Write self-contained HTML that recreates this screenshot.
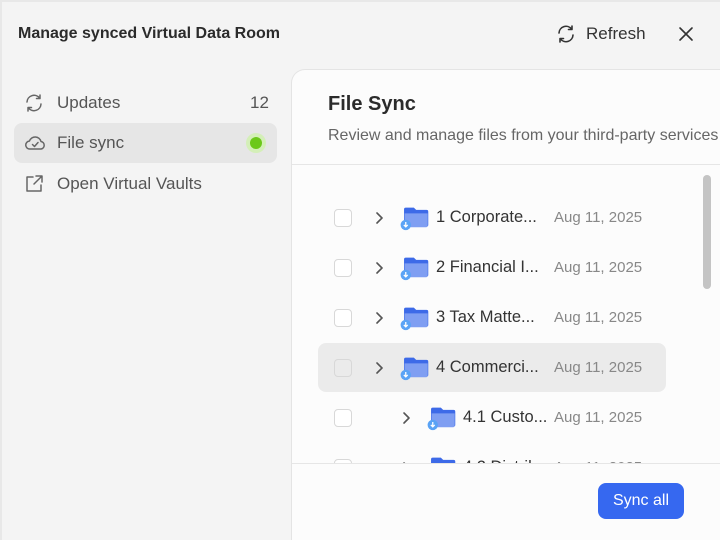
<!DOCTYPE html>
<html><head><style>
*{margin:0;padding:0;box-sizing:border-box}
html,body{width:720px;height:540px;overflow:hidden}
body{background:#f4f4f4;font-family:"Liberation Sans",sans-serif;position:relative;color:#333}
.frame{position:absolute;left:0;top:0;width:720px;height:540px;border:2px solid #e8e8e8;border-right:none;border-bottom:none}
.title{position:absolute;left:18px;top:25px;font-size:16px;font-weight:bold;color:#2b2b2b}
.refresh{position:absolute;left:556px;top:24px;font-size:17px;color:#333;display:flex;align-items:center;gap:10px}
.close{position:absolute;left:678px;top:26px}
.nav{position:absolute;left:14px;width:263px;height:40px;border-radius:8px;display:flex;align-items:center;font-size:17px;color:#555}
.nav svg{position:absolute;left:10px}
.nav span{position:absolute;left:43px}
.panel{position:absolute;left:291px;top:69px;width:440px;height:471px;background:#fcfcfc;border:1px solid #e4e4e4;border-bottom:none;border-radius:14px 0 0 0;overflow:hidden}
.ph{position:absolute;left:36px;top:23px;font-size:20px;font-weight:bold;color:#2b2b2b}
.ps{position:absolute;left:36px;top:57px;font-size:16px;color:#666;white-space:nowrap}
.hl{position:absolute;left:0;width:440px;height:1px;background:#e6e6e6}
.row{position:absolute;left:26px;width:348px;height:49px;border-radius:8px}
.cb{position:absolute;left:16px;top:16px;width:18px;height:18px;border:1.5px solid #d8d8d8;border-radius:4px;background:#fff}
.chev{position:absolute;top:17px}
.fold{position:absolute;top:11px}
.nm{position:absolute;top:15px;font-size:16.5px;color:#333;white-space:nowrap}
.dt{position:absolute;left:236px;top:16px;font-size:15px;color:#888;white-space:nowrap}
.btn{position:absolute;left:598px;top:483px;width:86px;height:36px;background:#3668f0;border-radius:8px;color:#fff;font-size:16px;text-align:center;line-height:36px}
</style></head><body>
<div class="frame"></div>
<div class="title">Manage synced Virtual Data Room</div>
<div class="refresh"><svg width="20" height="20" viewBox="0 0 20 20" fill="none" stroke="#333" stroke-width="1.6" stroke-linecap="round" stroke-linejoin="round"><path d="M3 9a7 7 0 0 1 12.5-4M16 2v3.5h-3.5"/><path d="M17 11a7 7 0 0 1-12.5 4M4 18v-3.5h3.5"/></svg><span>Refresh</span></div>
<svg class="close" width="16" height="16" viewBox="0 0 16 16" stroke="#333" stroke-width="1.6" stroke-linecap="round"><path d="M2 2l12 12M14 2L2 14"/></svg>

<div class="nav" style="top:83px"><svg width="20" height="20" viewBox="0 0 20 20" fill="none" stroke="#666" stroke-width="1.5" stroke-linecap="round" stroke-linejoin="round"><path d="M3 9a7 7 0 0 1 12.5-4M16 2v3.5h-3.5"/><path d="M17 11a7 7 0 0 1-12.5 4M4 18v-3.5h3.5"/></svg><span>Updates</span><span style="left:236px;color:#555">12</span></div>
<div class="nav" style="top:123px;background:#e6e6e6"><svg width="22" height="20" viewBox="0 0 22 20" fill="none" stroke="#666" stroke-width="1.5" stroke-linecap="round" stroke-linejoin="round"><path d="M6 16a4 4 0 0 1-.5-8A6 6 0 0 1 17 8.5a3.8 3.8 0 0 1 0 7.5z"/><path d="M8.5 11.5l2 2 3.5-4"/></svg><span>File sync</span><div style="position:absolute;left:232px;top:10px;width:20px;height:20px;border-radius:50%;background:#d4efb8"></div><div style="position:absolute;left:236px;top:14px;width:12px;height:12px;border-radius:50%;background:#6cc81a"></div></div>
<div class="nav" style="top:164px"><svg width="20" height="20" viewBox="0 0 20 20" fill="none" stroke="#666" stroke-width="1.5" stroke-linecap="round" stroke-linejoin="round"><path d="M9 3H3v14h14v-6"/><path d="M12 2h6v6M18 2l-8 8"/></svg><span>Open Virtual Vaults</span></div>

<div class="panel">
<div class="ph">File Sync</div>
<div class="ps">Review and manage files from your third-party services</div>
<div class="hl" style="top:94px"></div>
<div style="position:absolute;left:411px;top:105px;width:8px;height:114px;border-radius:4px;background:#c4c4c4"></div>

<div class="row" style="top:123px"><div class="cb"></div><svg class="chev" style="left:56px" width="10" height="16" viewBox="0 0 10 16" fill="none" stroke="#555" stroke-width="1.6" stroke-linecap="round" stroke-linejoin="round"><path d="M3 3l5 5-5 5"/></svg>
<svg class="fold" style="left:82px" width="30" height="28" viewBox="0 0 26 24"><path d="M5 3h7l2 2h9a1.5 1.5 0 0 1 1.5 1.5V18a1.5 1.5 0 0 1-1.5 1.5H5A1.5 1.5 0 0 1 3.5 18V4.5A1.5 1.5 0 0 1 5 3z" fill="#3d6ae8"/><path d="M4 8h20v10.5a1.5 1.5 0 0 1-1.5 1.5h-17A1.5 1.5 0 0 1 4 18.5z" fill="#7f9ef2"/><circle cx="5" cy="18" r="4.5" fill="#5aa3f5"/><path d="M5 15.5v4M3.3 18l1.7 1.7L6.7 18" stroke="#fff" stroke-width="1.1" fill="none"/></svg>
<div class="nm" style="left:118px">1 Corporate...</div><div class="dt">Aug 11, 2025</div></div>

<div class="row" style="top:173px"><div class="cb"></div><svg class="chev" style="left:56px" width="10" height="16" viewBox="0 0 10 16" fill="none" stroke="#555" stroke-width="1.6" stroke-linecap="round" stroke-linejoin="round"><path d="M3 3l5 5-5 5"/></svg>
<svg class="fold" style="left:82px" width="30" height="28" viewBox="0 0 26 24"><path d="M5 3h7l2 2h9a1.5 1.5 0 0 1 1.5 1.5V18a1.5 1.5 0 0 1-1.5 1.5H5A1.5 1.5 0 0 1 3.5 18V4.5A1.5 1.5 0 0 1 5 3z" fill="#3d6ae8"/><path d="M4 8h20v10.5a1.5 1.5 0 0 1-1.5 1.5h-17A1.5 1.5 0 0 1 4 18.5z" fill="#7f9ef2"/><circle cx="5" cy="18" r="4.5" fill="#5aa3f5"/><path d="M5 15.5v4M3.3 18l1.7 1.7L6.7 18" stroke="#fff" stroke-width="1.1" fill="none"/></svg>
<div class="nm" style="left:118px">2 Financial I...</div><div class="dt">Aug 11, 2025</div></div>

<div class="row" style="top:223px"><div class="cb"></div><svg class="chev" style="left:56px" width="10" height="16" viewBox="0 0 10 16" fill="none" stroke="#555" stroke-width="1.6" stroke-linecap="round" stroke-linejoin="round"><path d="M3 3l5 5-5 5"/></svg>
<svg class="fold" style="left:82px" width="30" height="28" viewBox="0 0 26 24"><path d="M5 3h7l2 2h9a1.5 1.5 0 0 1 1.5 1.5V18a1.5 1.5 0 0 1-1.5 1.5H5A1.5 1.5 0 0 1 3.5 18V4.5A1.5 1.5 0 0 1 5 3z" fill="#3d6ae8"/><path d="M4 8h20v10.5a1.5 1.5 0 0 1-1.5 1.5h-17A1.5 1.5 0 0 1 4 18.5z" fill="#7f9ef2"/><circle cx="5" cy="18" r="4.5" fill="#5aa3f5"/><path d="M5 15.5v4M3.3 18l1.7 1.7L6.7 18" stroke="#fff" stroke-width="1.1" fill="none"/></svg>
<div class="nm" style="left:118px">3 Tax Matte...</div><div class="dt">Aug 11, 2025</div></div>

<div class="row" style="top:273px;background:#ebebeb"><div class="cb" style="background:#ebebeb"></div><svg class="chev" style="left:56px" width="10" height="16" viewBox="0 0 10 16" fill="none" stroke="#555" stroke-width="1.6" stroke-linecap="round" stroke-linejoin="round"><path d="M3 3l5 5-5 5"/></svg>
<svg class="fold" style="left:82px" width="30" height="28" viewBox="0 0 26 24"><path d="M5 3h7l2 2h9a1.5 1.5 0 0 1 1.5 1.5V18a1.5 1.5 0 0 1-1.5 1.5H5A1.5 1.5 0 0 1 3.5 18V4.5A1.5 1.5 0 0 1 5 3z" fill="#3d6ae8"/><path d="M4 8h20v10.5a1.5 1.5 0 0 1-1.5 1.5h-17A1.5 1.5 0 0 1 4 18.5z" fill="#7f9ef2"/><circle cx="5" cy="18" r="4.5" fill="#5aa3f5"/><path d="M5 15.5v4M3.3 18l1.7 1.7L6.7 18" stroke="#fff" stroke-width="1.1" fill="none"/></svg>
<div class="nm" style="left:118px">4 Commerci...</div><div class="dt">Aug 11, 2025</div></div>

<div class="row" style="top:323px"><div class="cb"></div><svg class="chev" style="left:83px" width="10" height="16" viewBox="0 0 10 16" fill="none" stroke="#555" stroke-width="1.6" stroke-linecap="round" stroke-linejoin="round"><path d="M3 3l5 5-5 5"/></svg>
<svg class="fold" style="left:109px" width="30" height="28" viewBox="0 0 26 24"><path d="M5 3h7l2 2h9a1.5 1.5 0 0 1 1.5 1.5V18a1.5 1.5 0 0 1-1.5 1.5H5A1.5 1.5 0 0 1 3.5 18V4.5A1.5 1.5 0 0 1 5 3z" fill="#3d6ae8"/><path d="M4 8h20v10.5a1.5 1.5 0 0 1-1.5 1.5h-17A1.5 1.5 0 0 1 4 18.5z" fill="#7f9ef2"/><circle cx="5" cy="18" r="4.5" fill="#5aa3f5"/><path d="M5 15.5v4M3.3 18l1.7 1.7L6.7 18" stroke="#fff" stroke-width="1.1" fill="none"/></svg>
<div class="nm" style="left:145px">4.1 Custo...</div><div class="dt">Aug 11, 2025</div></div>

<div class="row" style="top:373px"><div class="cb"></div><svg class="chev" style="left:83px" width="10" height="16" viewBox="0 0 10 16" fill="none" stroke="#555" stroke-width="1.6" stroke-linecap="round" stroke-linejoin="round"><path d="M3 3l5 5-5 5"/></svg>
<svg class="fold" style="left:109px" width="30" height="28" viewBox="0 0 26 24"><path d="M5 3h7l2 2h9a1.5 1.5 0 0 1 1.5 1.5V18a1.5 1.5 0 0 1-1.5 1.5H5A1.5 1.5 0 0 1 3.5 18V4.5A1.5 1.5 0 0 1 5 3z" fill="#3d6ae8"/><path d="M4 8h20v10.5a1.5 1.5 0 0 1-1.5 1.5h-17A1.5 1.5 0 0 1 4 18.5z" fill="#7f9ef2"/></svg>
<div class="nm" style="left:145px">4.2 Distrib...</div><div class="dt">Aug 11, 2025</div></div>

<div style="position:absolute;left:0;top:393px;width:440px;height:100px;background:#fcfcfc;border-top:1px solid #e6e6e6"></div>
</div>
<div class="btn">Sync all</div>
</body></html>
